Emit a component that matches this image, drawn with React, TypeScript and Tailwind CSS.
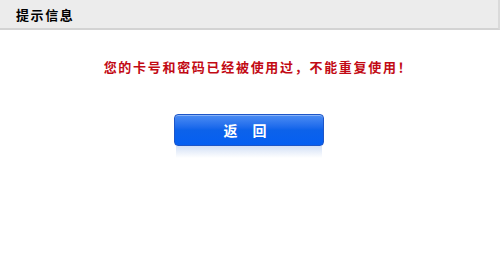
export default function App() {
  const cjk = '"Noto Sans CJK SC", "Liberation Sans", sans-serif';
  return (
    <div className="w-[500px] h-[253px] bg-white flex flex-col" style={{ fontFamily: cjk }}>
      <div className="h-[30px] shrink-0 bg-[#ececec] border-b-2 border-[#d3d3d3] border-r-2 border-r-[#dadada] flex items-center pl-4">
        <span className="text-[13px] font-bold text-black tracking-[1.6px] leading-none">提示信息</span>
      </div>

      <div className="flex flex-col items-center">
        <p className="mt-[30px] text-[13px] font-bold text-[#c20a14] tracking-[1.7px] leading-[14px] pl-[16px]">
          您的卡号和密码已经被使用过，不能重复使用！
        </p>

        <div className="mt-[40px] flex flex-col items-center pr-[2px]">
          <button
            type="button"
            className="w-[150px] h-[32px] rounded-[4px] border border-[#1d56c8] bg-gradient-to-b from-[#4b8cf3] via-[#0d62ea] to-[#055ff2] shadow-[inset_0_1px_0_rgba(255,255,255,0.35)] flex items-center justify-center gap-[15px] pr-[8px] text-white text-[14px] font-bold leading-none"
          >
            <span>返</span>
            <span>回</span>
          </button>
          <div className="w-[146px] h-[12px] bg-gradient-to-b from-[#c9d9f3] to-white opacity-80" />
        </div>
      </div>
    </div>
  );
}
